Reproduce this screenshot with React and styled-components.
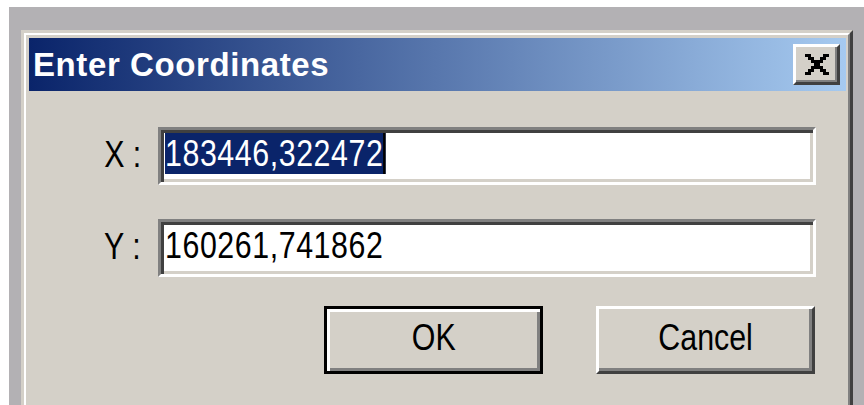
import React from "react";
import styled, { createGlobalStyle } from "styled-components";

const GlobalStyle = createGlobalStyle`
  html, body {
    margin: 0;
    padding: 0;
    background: #ffffff;
    overflow: hidden;
  }
`;

const Desktop = styled.div`
  margin: 7px 0 0 9px;
  height: calc(100vh - 7px);
  padding: 23px 11px 0 12px;
  box-sizing: border-box;
  background: #b3b1b4;
  overflow: hidden;
`;

const Window = styled.div`
  min-height: 420px;
  border: 3px solid;
  border-color: #d4d0c8 #404040 #404040 #d4d0c8;
  background: #d4d0c8;
`;

const Frame = styled.div`
  min-height: 420px;
  border: 2px solid;
  border-color: #ffffff #808080 #808080 #ffffff;
  padding: 3px 2px 0 3px;
`;

const TitleBar = styled.div`
  height: 53px;
  display: flex;
  align-items: center;
  justify-content: space-between;
  padding: 0 6px 0 4px;
  background: linear-gradient(to right, #0a246a, #a6caf0);
`;

const Title = styled.span`
  font-family: "Liberation Sans", Arial, sans-serif;
  font-weight: bold;
  font-size: 33px;
  letter-spacing: 0.6px;
  line-height: 53px;
  color: #ffffff;
`;

const CloseButton = styled.button`
  width: 47px;
  height: 41px;
  padding: 0;
  display: flex;
  align-items: center;
  justify-content: center;
  background: #d4d0c8;
  border: 3px solid;
  border-color: #ffffff #404040 #404040 #ffffff;
  box-shadow: inset -2px -2px 0 #808080;
`;

const Body = styled.div`
  padding: 36px 30px 0 0;
  font-family: "Liberation Sans", Arial, sans-serif;
  font-size: 37px;
  color: #000000;
`;

/* the dialog font is a narrow one; squeeze the sans to its width */
const Narrow = styled.span`
  display: inline-block;
  transform: scaleX(0.82);
  transform-origin: ${(p) => p.$origin || "center"};
  white-space: pre;
`;

const Form = styled.div`
  display: grid;
  grid-template-columns: auto 658px;
  grid-auto-rows: 58px;
  justify-content: end;
  column-gap: 17px;
  row-gap: 34px;
  align-items: center;
`;

const Label = styled.span`
  justify-self: end;
  line-height: 40px;
  padding-bottom: 2px;
`;

const Field = styled.div`
  height: 58px;
  box-sizing: border-box;
  display: flex;
  align-items: center;
  padding: 0 4px 4px;
  background: #ffffff;
  border: 3px solid;
  border-color: #808080 #ffffff #ffffff #808080;
  box-shadow: inset 3px 3px 0 #404040, inset -3px -3px 0 #d4d0c8;
  line-height: 40px;
  letter-spacing: 0.7px;
`;

const Selected = styled.span`
  background: #0a246a;
  color: #ffffff;
  border-right: 3px solid #000000;
`;

const Actions = styled.div`
  display: flex;
  justify-content: flex-end;
  gap: 53px;
  margin-top: 29px;
  padding-right: 1px;
`;

const Button = styled.button`
  width: 219px;
  height: 68px;
  padding: 0 0 4px;
  font: inherit;
  color: #000000;
  background: #d4d0c8;
  border: 3px solid;
  border-color: ${(p) =>
    p.$default ? "#000000" : "#ffffff #404040 #404040 #ffffff"};
  box-shadow: ${(p) =>
    p.$default
      ? "inset 3px 3px 0 #ffffff, inset -3px -3px 0 #808080"
      : "inset -3px -3px 0 #808080"};
`;

const CloseGlyph = () => (
  <svg width="24" height="21" viewBox="0 0 8 7" shapeRendering="crispEdges">
    <path
      fill="#000"
      d="M0 0h2v1h-2z M6 0h2v1h-2z M1 1h2v1h-2z M5 1h2v1h-2z M2 2h4v1h-4z M3 3h2v1h-2z M2 4h4v1h-4z M1 5h2v1h-2z M5 5h2v1h-2z M0 6h2v1h-2z M6 6h2v1h-2z"
    />
  </svg>
);

const App = () => {
  return (
    <>
      <GlobalStyle />
      <Desktop>
        <Window>
          <Frame>
            <TitleBar>
              <Title>Enter Coordinates</Title>
              <CloseButton aria-label="Close">
                <CloseGlyph />
              </CloseButton>
            </TitleBar>
            <Body>
              <Form>
                <Label>
                  <Narrow $origin="right">X :</Narrow>
                </Label>
                <Field>
                  <Narrow $origin="left">
                    <Selected>183446,322472</Selected>
                  </Narrow>
                </Field>
                <Label>
                  <Narrow $origin="right">Y :</Narrow>
                </Label>
                <Field>
                  <Narrow $origin="left">160261,741862</Narrow>
                </Field>
              </Form>
              <Actions>
                <Button $default>
                  <Narrow>OK</Narrow>
                </Button>
                <Button>
                  <Narrow>Cancel</Narrow>
                </Button>
              </Actions>
            </Body>
          </Frame>
        </Window>
      </Desktop>
    </>
  );
};

export default App;
